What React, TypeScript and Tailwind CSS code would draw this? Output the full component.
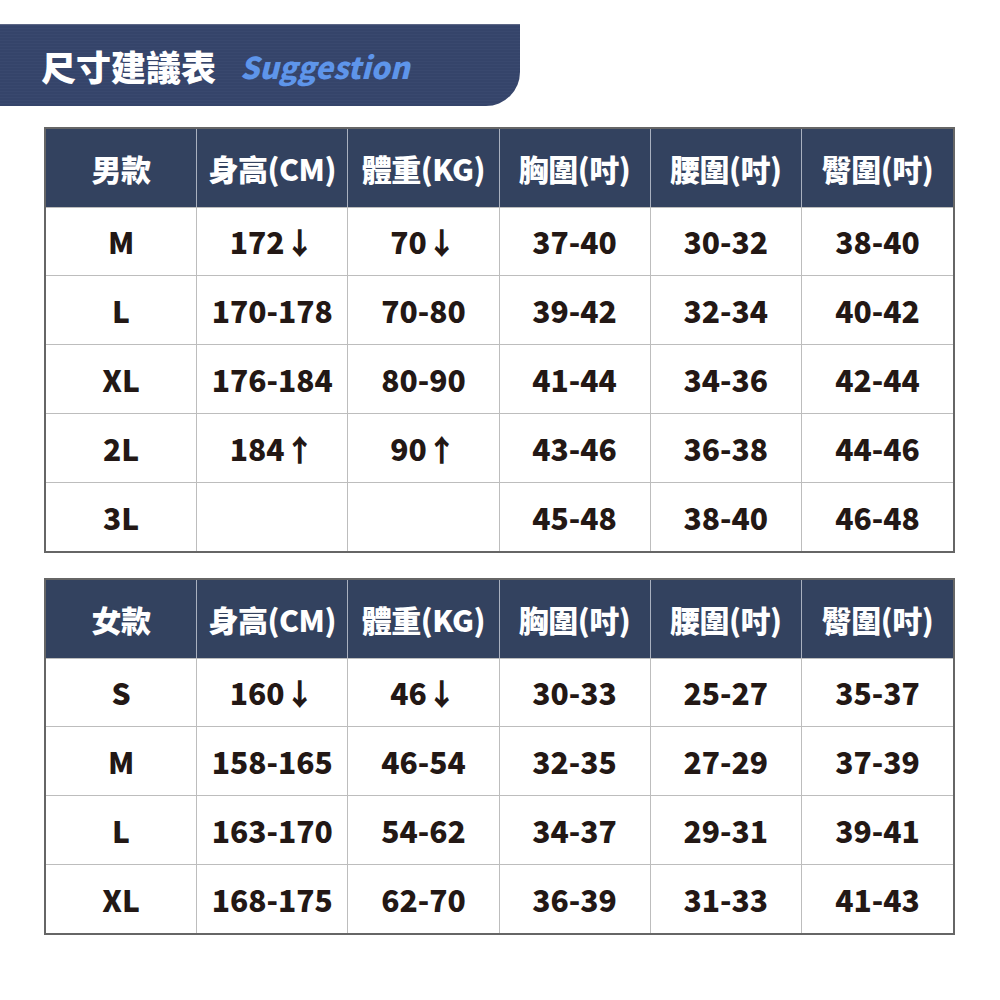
const font = "font-['Noto_Sans_CJK_TC','Noto_Sans',sans-serif]";

const headers = ["身高(CM)", "體重(KG)", "胸圍(吋)", "腰圍(吋)", "臀圍(吋)"];

const menRows = [
	["M", "172↓", "70↓", "37-40", "30-32", "38-40"],
	["L", "170-178", "70-80", "39-42", "32-34", "40-42"],
	["XL", "176-184", "80-90", "41-44", "34-36", "42-44"],
	["2L", "184↑", "90↑", "43-46", "36-38", "44-46"],
	["3L", "", "", "45-48", "38-40", "46-48"],
];

const womenRows = [
	["S", "160↓", "46↓", "30-33", "25-27", "35-37"],
	["M", "158-165", "46-54", "32-35", "27-29", "37-39"],
	["L", "163-170", "54-62", "34-37", "29-31", "39-41"],
	["XL", "168-175", "62-70", "36-39", "31-33", "41-43"],
];

function SizeTable({ title, rows }: { title: string; rows: string[][] }) {
	return (
		<div className="ml-[44px] w-[911px] border-2 border-[#666666] bg-white">
			{/* 表頭 */}
			<div className="grid h-[78px] grid-cols-6 bg-[#33425f] text-white">
				{[title, ...headers].map((h, i) => (
					<div
						key={h}
						className={`flex items-center justify-center text-[30px] font-black tracking-[-0.5px] ${
							i < 5 ? "border-r border-[#a9b0bf]" : ""
						}`}
					>
						{h}
					</div>
				))}
			</div>
			{rows.map((row, r) => (
				<div
					key={row[0]}
					className={`grid grid-cols-6 text-[#231815] ${
						r < rows.length - 1 ? "h-[69px] border-b border-[#bdbdbd]" : "h-[68px]"
					} ${r === 0 ? "border-t border-[#bdbdbd]" : ""}`}
				>
					{row.map((cell, i) => (
						<div
							key={i}
							className={`flex items-center justify-center text-[30px] font-black ${
								i < 5 ? "border-r border-[#bdbdbd]" : ""
							}`}
						>
							{cell}
						</div>
					))}
				</div>
			))}
		</div>
	);
}

export default function App() {
	return (
		<div className={`min-h-[1000px] w-[1000px] bg-white pt-[24px] ${font}`}>
			{/* タイトル帯 */}
			<div className="flex h-[82px] w-[520px] items-center gap-[24px] rounded-br-[34px] border-t border-[#5c6685] bg-[repeating-linear-gradient(0deg,#35446a_0px,#35446a_2px,#39486e_2px,#39486e_3px)] pl-[41px]">
				<span className="text-[35px] font-black leading-none text-white">尺寸建議表</span>
				<span className="text-[30px] font-black italic leading-none text-[#5e95ea]">Suggestion</span>
			</div>

			<div className="mt-[21px]">
				<SizeTable title="男款" rows={menRows} />
			</div>
			<div className="mt-[25px]">
				<SizeTable title="女款" rows={womenRows} />
			</div>
		</div>
	);
}
